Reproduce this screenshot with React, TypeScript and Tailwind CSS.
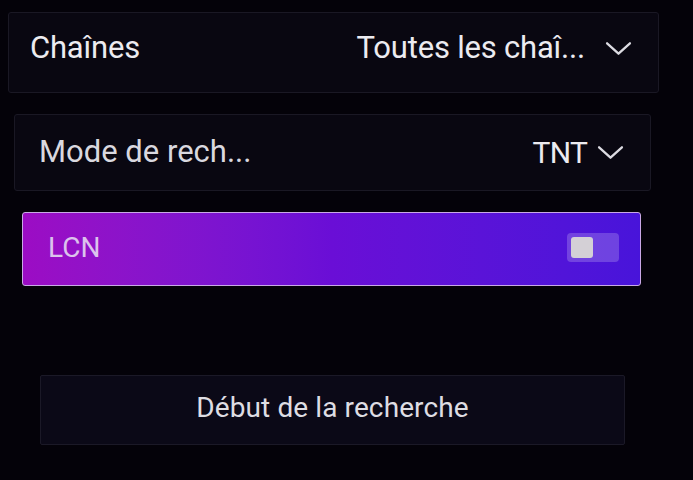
function Chevron({ className = "" }: { className?: string }) {
  return (
    <svg viewBox="0 0 26 16" className={className} fill="none" stroke="currentColor" strokeWidth="2.2" strokeLinecap="round" strokeLinejoin="round">
      <path d="M2 3 L13 13 L24 3" />
    </svg>
  )
}

export default function App() {
  return (
    <div
      className="w-[693px] h-[480px] bg-[#040209] overflow-hidden text-[#ecebf0]"
      style={{ fontFamily: "Roboto, 'Liberation Sans', sans-serif" }}
    >
      <div className="flex flex-col pt-[12px]">
        <div className="ml-[8px] w-[651px] h-[81px] flex items-center justify-between pl-[21px] pr-[26px] pb-[8px] bg-[#090711] border border-[#1a1824] rounded-[3px]">
          <span className="text-[31px] tracking-[-0.2px]">Chaînes</span>
          <div className="flex items-center gap-[20px]">
            <span className="text-[31px] tracking-[-0.2px]">Toutes les chaî...</span>
            <Chevron className="w-[27px] h-[17px] text-[#dcdbe2]" />
          </div>
        </div>

        <div className="ml-[14px] mt-[21px] w-[637px] h-[77px] flex items-center justify-between pl-[24px] pr-[26px] bg-[#090711] border border-[#1a1824] rounded-[3px]">
          <span className="text-[31px] text-[#d9d8df]">Mode de rech...</span>
          <div className="flex items-center gap-[10px]">
            <span className="text-[30px] tracking-[-0.8px]">TNT</span>
            <Chevron className="w-[27px] h-[17px] text-[#dcdbe2]" />
          </div>
        </div>

        <div className="ml-[22px] mt-[21px] w-[619px] h-[74px] flex items-center justify-between pl-[25px] pr-[21px] pb-[3px] bg-gradient-to-r from-[#9c0cc4] via-[#6a0ed6] to-[#4814da] border border-[#c9a8e6] rounded-[3px]">
          <span className="text-[28px] text-[#dcc3ec]">LCN</span>
          <div className="w-[52px] h-[29px] rounded-[4px] bg-[#ffffff33] flex items-center pl-[4px]">
            <div className="w-[22px] h-[21px] rounded-[3px] bg-[#d4d0d6]" />
          </div>
        </div>

        <div className="ml-[40px] mt-[89px] w-[585px] h-[70px] flex items-center justify-center pb-[4px] bg-[#0b0917] border border-[#1b1927] rounded-[2px]">
          <span className="text-[28px] tracking-[0.1px] text-[#dedde3]">Début de la recherche</span>
        </div>
      </div>
    </div>
  )
}
